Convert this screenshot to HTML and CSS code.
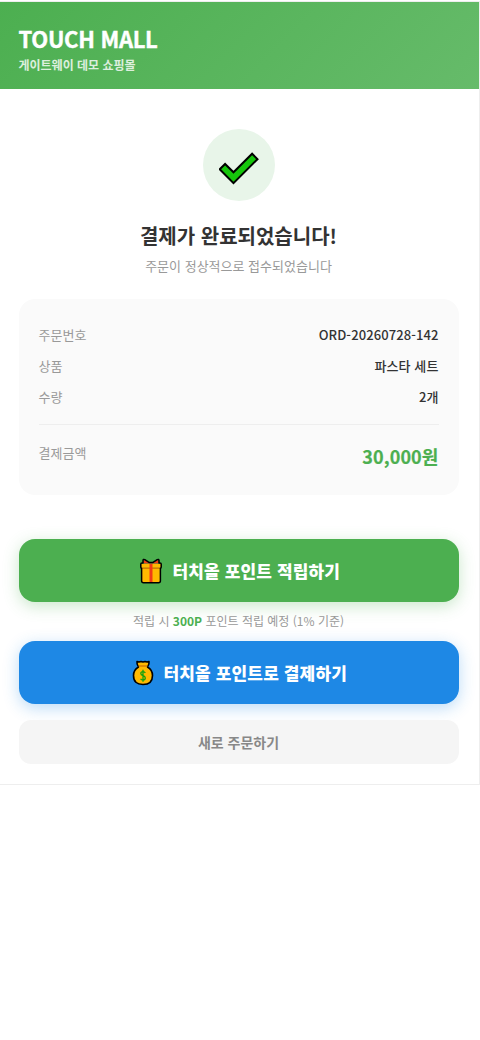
FILE: index.html
```html
<!DOCTYPE html>
<html lang="ko">
<head>
<meta charset="utf-8">
<title>TOUCH MALL</title>
<link rel="stylesheet" href="styles.css">
</head>
<body>
<div class="shell">
  <header class="header">
    <h1 class="brand">TOUCH MALL</h1>
    <p class="tagline">게이트웨이 데모 쇼핑몰</p>
  </header>
  <main class="content">
    <div class="badge">
      <svg class="check" width="40" height="34" viewBox="0 0 40 34"><path d="M.7 18.3L6.1 13 14.5 21.3 33.1 2.7 38.5 8.2 14.5 32.2Z" fill="#16c60c" stroke="#000" stroke-width="2"/></svg>
    </div>
    <h2 class="title">결제가 완료되었습니다!</h2>
    <p class="subtitle">주문이 정상적으로 접수되었습니다</p>
    <section class="summary">
      <div class="row"><span class="label">주문번호</span><span class="value">ORD-20260728-142</span></div>
      <div class="row"><span class="label">상품</span><span class="value">파스타 세트</span></div>
      <div class="row"><span class="label">수량</span><span class="value">2개</span></div>
      <div class="row total"><span class="label">결제금액</span><span class="value amount">30,000원</span></div>
    </section>
    <button class="btn earn">
      <svg width="22" height="26" viewBox="0 0 22 26"><path d="M2 9.5H20V24H2Z" fill="#ffb900"/><path d="M1 6H21V9.5H1Z" fill="#ffb900"/><path d="M2 9.5H20V11H2Z" fill="#d67d00"/><path d="M9.5 6H12.5V24.5H9.5Z" fill="#f03a17"/><path d="M3.5 5.5V2.5L5 2 9 5H13L17 2 18.5 2.5V5.5Z" fill="#f03a17"/><path d="M3 5V2.5Q3 1 4.8 1.6L9 4.4H13L17.2 1.6Q19 1 19 2.5V5H20Q21.2 5 21.2 6V9Q21.2 10 20.4 10.5V23Q20.4 24.7 18.5 24.7H3.5Q1.6 24.7 1.6 23V10.5Q.8 10 .8 9V6Q.8 5 2 5Z" fill="none" stroke="#000" stroke-width="1.5" stroke-linejoin="round"/></svg>
      <span>터치올 포인트 적립하기</span>
    </button>
    <p class="hint">적립 시 <strong>300P</strong> 포인트 적립 예정 (1% 기준)</p>
    <button class="btn pay">
      <svg width="22" height="26" viewBox="0 0 22 26"><path d="M5 1.5L7 2 9 1.5 11 2 13 1.5 15 2 17 1.5Q17.5 4 15.5 7Q20.5 10 20.5 15.5Q20.5 24.5 11 24.5T1.5 15.5Q1.5 10 6.5 7Q4.5 4 5 1.5Z" fill="#ffb900" stroke="#000" stroke-width="1.6" stroke-linejoin="round"/><path d="M6.7 6H15.3" stroke="#d67d00" stroke-width="1.5"/><path d="M13.3 12.8Q12.6 11.6 11 11.6Q8.8 11.6 8.8 13.5Q8.8 15 11 15.6T13.3 18Q13.3 19.9 11 19.9Q9.2 19.9 8.6 18.7M11 9.7V21.8" fill="none" stroke="#13a10e" stroke-width="1.3"/></svg>
      <span>터치올 포인트로 결제하기</span>
    </button>
    <button class="reset">새로 주문하기</button>
  </main>
</div>
</body>
</html>
```
FILE: styles.css
```css
* { box-sizing: border-box; margin: 0; padding: 0; }
body {
  background: #fff;
  color: #333;
  font-family: "Noto Sans CJK KR", sans-serif;
  padding-top: 1px;
}
.shell {
  width: 480px;
  height: 784px;
  border: 1px solid #eee;
  border-left: 0;
  background: #fff;
}
.header {
  height: 87px;
  padding: 20px 18.5px 0;
  background: linear-gradient(135deg, #4caf50, #66bb6a);
  color: #fff;
}
.brand { font-size: 22px; font-weight: 700; line-height: 32px; letter-spacing: -.3px; -webkit-text-stroke: .4px #fff; }
.tagline { margin-top: 2px; font-size: 12px; font-weight: 600; line-height: 18px; opacity: .8; }
.content { padding: 40px 20.5px 0 18.5px; display: flex; flex-direction: column; }
.badge {
  width: 72px;
  height: 72px;
  border-radius: 50%;
  background: #e8f5e9;
  align-self: center;
  display: flex;
  align-items: center;
  justify-content: center;
}
.check { margin-top: 6px; }
.title { margin-top: 20px; font-size: 20px; font-weight: 700; line-height: 29px; text-align: center; }
.subtitle { margin-top: 6px; font-size: 13px; line-height: 19px; color: #999; text-align: center; }
.summary { margin-top: 24px; height: 196px; padding: 20px; border-radius: 16px; background: #fafafa; }
.row { display: flex; justify-content: space-between; padding: 6px 0; font-size: 13px; line-height: 19px; }
.label { color: #999; }
.value { font-weight: 500; letter-spacing: .1px; color: #333; }
.total { margin-top: 12px; padding-top: 18px; border-top: 1px solid #eee; }
.amount { font-size: 18px; font-weight: 700; line-height: 27px; color: #4caf50; -webkit-text-stroke: .2px #4caf50; }
.btn {
  height: 63px;
  border: 0;
  border-radius: 16px;
  display: flex;
  align-items: center;
  justify-content: center;
  gap: 10.5px;
  color: #fff;
  font: 800 17px/25px "Noto Sans CJK KR", sans-serif;
  letter-spacing: .15px;
}
.btn svg { margin-left: 2px; }
.earn { margin-top: 44px; background: #4caf50; box-shadow: 0 4px 16px rgba(76, 175, 80, .3); }
.earn svg { margin-left: 3px; }
.pay { background: #1e88e5; box-shadow: 0 4px 16px rgba(30, 136, 229, .3); }
.pay svg { margin-right: -1px; }
.hint { padding: 10px 0 11px; font-size: 12px; line-height: 18px; color: #999; text-align: center; }
.hint strong { color: #4caf50; font-weight: 700; }
.reset {
  margin-top: 16px;
  height: 44px;
  border: 0;
  border-radius: 12px;
  background: #f5f5f5;
  color: #888;
  font: 600 14px/20px "Noto Sans CJK KR", sans-serif;
}
```
